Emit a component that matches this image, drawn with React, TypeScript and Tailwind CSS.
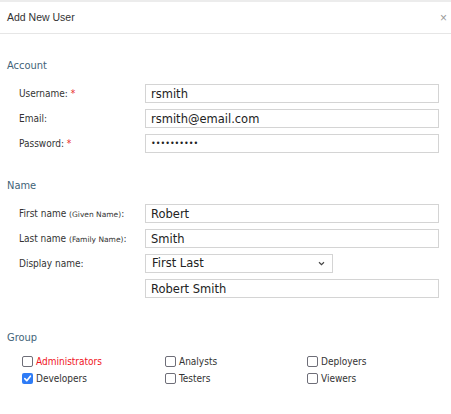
import React from "react";

const body = { fontFamily: '"DejaVu Sans Condensed", "DejaVu Sans", Verdana, sans-serif' };
const wide = { fontFamily: '"DejaVu Sans", Verdana, sans-serif' };

function Row({ label, children }: { label: React.ReactNode; children: React.ReactNode }) {
  return (
    <div className="grid grid-cols-[126px_1fr] items-center h-[19px]">
      <div className="text-[10px] text-[#333] whitespace-nowrap">{label}</div>
      <div className="h-[19px]">{children}</div>
    </div>
  );
}

function TextBox({ value, type = "text" }: { value: string; type?: string }) {
  return (
    <input
      readOnly
      type={type}
      value={value}
      style={wide}
      className={`block w-full h-[19px] border border-[#d4d4d4] bg-white px-[5px] ${type === "password" ? "text-[8px]" : "text-[11.5px]"} text-[#222] outline-none`}
    />
  );
}

function Check({ label, checked, red }: { label: string; checked?: boolean; red?: boolean }) {
  return (
    <div className="flex items-center h-[13px] gap-[3px]">
      {checked ? (
        <span className="w-[11px] h-[11px] rounded-[2px] bg-[#2f7cf6] flex items-center justify-center">
          <svg width="9" height="9" viewBox="0 0 10 10">
            <path d="M2 5.2 L4.2 7.4 L8.2 2.4" stroke="white" strokeWidth="1.8" fill="none" strokeLinecap="round" strokeLinejoin="round" />
          </svg>
        </span>
      ) : (
        <span className="w-[11px] h-[11px] rounded-[2px] border border-[#6e6e78] bg-white" />
      )}
      <span className={`text-[10px] ${red ? "text-[#f0141e]" : "text-[#333]"}`}>{label}</span>
    </div>
  );
}

export default function App() {
  return (
    <div className="w-[451px] h-[414px] bg-white overflow-hidden" style={body}>
      <div className="h-[2px] bg-[#ececec]" />
      <div className="h-[32px] border-b border-[#e6e6e6] flex items-center justify-between pl-[7px] pr-[4px]">
        <span className="text-[10.5px] text-[#333]" style={{ fontFamily: '"Liberation Sans", Arial, sans-serif' }}>
          Add New User
        </span>
        <span className="text-[12px] text-[#9a9a9a] leading-none" style={{ fontFamily: '"Liberation Sans", Arial, sans-serif' }}>
          ×
        </span>
      </div>

      <div className="pt-[25px] pl-[7px] pr-[12px]">
        <div className="text-[11px] leading-[14px] text-[#3f6378]">Account</div>
        <div className="mt-[11px] pl-[12px] flex flex-col gap-[6px]">
          <Row label={<>Username: <span className="text-[#e8262d]">*</span></>}>
            <TextBox value="rsmith" />
          </Row>
          <Row label="Email:">
            <TextBox value="rsmith@email.com" />
          </Row>
          <Row label={<>Password: <span className="text-[#e8262d]">*</span></>}>
            <TextBox value="secret1234" type="password" />
          </Row>
        </div>

        <div className="mt-[26px] text-[11px] leading-[14px] text-[#3f6378]">Name</div>
        <div className="mt-[11px] pl-[12px] flex flex-col gap-[6px]">
          <Row label={<>First name <span className="text-[7.5px]" style={wide}>(Given Name)</span>:</>}>
            <TextBox value="Robert" />
          </Row>
          <Row label={<>Last name <span className="text-[7.5px]" style={wide}>(Family Name)</span>:</>}>
            <TextBox value="Smith" />
          </Row>
          <Row label="Display name:">
            <div className="w-[188px] h-[19px] border border-[#d4d4d4] bg-white flex items-center justify-between pl-[6px] pr-[7px]">
              <span className="text-[11.5px] text-[#222]" style={wide}>First Last</span>
              <svg width="7" height="5" viewBox="0 0 8 6">
                <path d="M1 1.5 L4 4.5 L7 1.5" stroke="#444" strokeWidth="1.4" fill="none" />
              </svg>
            </div>
          </Row>
          <Row label="">
            <TextBox value="Robert Smith" />
          </Row>
        </div>

        <div className="mt-[33px] text-[11px] leading-[14px] text-[#3f6378]">Group</div>
        <div className="mt-[10px] pl-[15px] grid grid-cols-[143px_142px_1fr] gap-y-[4px]">
          <Check label="Administrators" red />
          <Check label="Analysts" />
          <Check label="Deployers" />
          <Check label="Developers" checked />
          <Check label="Testers" />
          <Check label="Viewers" />
        </div>
      </div>
    </div>
  );
}
